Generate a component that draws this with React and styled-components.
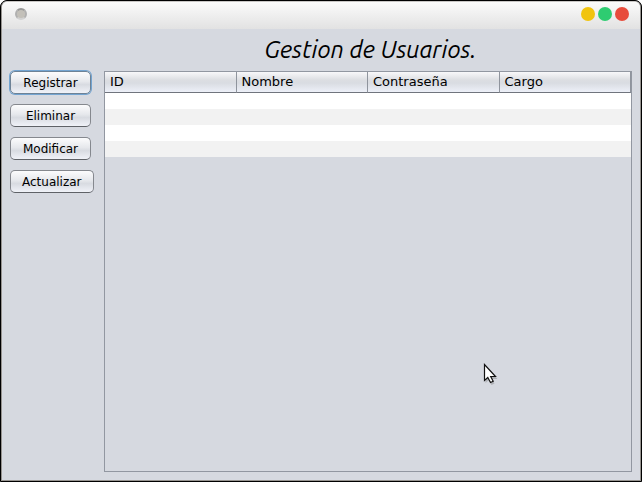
import React from "react";
import styled, { createGlobalStyle } from "styled-components";

const GlobalStyle = createGlobalStyle`
  * { box-sizing: border-box; }
  body {
    margin: 0;
    background: #fff;
    color: #000;
    font-family: "DejaVu Sans", Verdana, sans-serif;
    font-size: 13px;
  }
`;

const Window = styled.div`
  position: relative;
  display: flex;
  min-height: 100vh;
  border: 1px solid #000;
  border-radius: 7px 7px 0 0;
  background: #000;
`;

const Frame = styled.div`
  flex: 1;
  display: flex;
  flex-direction: column;
  min-width: 0;
  border: 1px solid #96938f;
  border-top-color: #c9c7c5;
  border-radius: 6px 6px 0 0;
  background: #d6d9e0;
  overflow: hidden;
`;

const TitleBar = styled.header`
  display: flex;
  align-items: center;
  justify-content: space-between;
  height: 27px;
  padding: 0 11px 3px 13px;
  background: linear-gradient(#fbfbfb, #e2e2e2);
`;

const MenuDot = styled.button`
  width: 12px;
  height: 12px;
  padding: 0;
  border: 2px solid #aaa;
  border-color: #979797 #b0b0b0 #d2d2d2;
  border-radius: 50%;
  background: #c3c0b9;
`;

const WindowControls = styled.div`
  display: flex;
  gap: 3px;
`;

const Control = styled.button`
  width: 14px;
  height: 14px;
  padding: 0;
  border: 0;
  border-radius: 50%;
  background: ${(p) => p.$color};
`;

const Content = styled.main`
  flex: 1;
  display: grid;
  grid-template-columns: 84px minmax(0, 1fr);
  grid-template-rows: 42px 1fr;
  column-gap: 10px;
  padding: 0 8px 8px;
`;

const Heading = styled.h1`
  grid-column: 2;
  margin: 0;
  padding: 4px 0 0 5px;
  font: italic 400 24px/34px Ubuntu, "Noto Sans", sans-serif;
  text-align: center;
`;

const Actions = styled.nav`
  display: flex;
  flex-direction: column;
  align-items: flex-start;
  gap: 10px;
`;

const ActionButton = styled.button`
  min-width: 81px;
  height: 23px;
  padding: 0 11px;
  border: 1px solid #85888e;
  border-bottom-color: #5f6267;
  border-radius: 5px;
  background: linear-gradient(#fcfcfd, #e6e8ec 45%, #d8dbe1 60%, #f0f2f8);
  color: #000;
  font: 12px/20px "DejaVu Sans", Verdana, sans-serif;
  white-space: nowrap;

  &:focus {
    outline: none;
    border-color: #6d8296;
    box-shadow: 0 0 0 1px #73a4d1;
  }
`;

const TablePane = styled.section`
  border: 1px solid #9297a1;
`;

const Table = styled.table`
  width: 100%;
  table-layout: fixed;
  border-collapse: separate;
  border-spacing: 0;
`;

const HeaderCell = styled.th`
  height: 21px;
  padding: 0 5px 1px;
  border-right: 1px solid #8f949d;
  border-bottom: 1px solid #70747d;
  background: linear-gradient(#f8f8fa, #dcdee2 40%, #d9dce2 55%, #edf0f8);
  font-weight: 400;
  line-height: 19px;
  text-align: left;
`;

const Row = styled.tr`
  background: #fff;
  &:nth-child(even) { background: #f2f2f2; }
`;

const Cell = styled.td`
  height: 16px;
  padding: 0;
`;

const Pointer = styled.svg`
  position: absolute;
  left: 482px;
  top: 362px;
  width: 15px;
  height: 22px;
  pointer-events: none;
`;

const actions = ["Registrar", "Eliminar", "Modificar", "Actualizar"];
const columns = ["ID", "Nombre", "Contraseña", "Cargo"];
const rows = [1, 2, 3, 4];

export default function App() {
  return (
    <>
      <GlobalStyle />
      <Window>
        <Frame>
          <TitleBar>
            <MenuDot type="button" aria-label="Menú" />
            <WindowControls>
              <Control type="button" aria-label="Minimizar" $color="#f1c40f" />
              <Control type="button" aria-label="Maximizar" $color="#2ecc71" />
              <Control type="button" aria-label="Cerrar" $color="#e74c3c" />
            </WindowControls>
          </TitleBar>
          <Content>
            <Heading>Gestion de Usuarios.</Heading>
            <Actions>
              {actions.map((label, i) => (
                <ActionButton key={label} type="button" autoFocus={i === 0}>
                  {label}
                </ActionButton>
              ))}
            </Actions>
            <TablePane>
              <Table>
                <thead>
                  <tr>
                    {columns.map((name) => (
                      <HeaderCell key={name} scope="col">{name}</HeaderCell>
                    ))}
                  </tr>
                </thead>
                <tbody>
                  {rows.map((id) => (
                    <Row key={id}>
                      {columns.map((name) => <Cell key={name} />)}
                    </Row>
                  ))}
                </tbody>
              </Table>
            </TablePane>
          </Content>
        </Frame>
        <Pointer viewBox="0 0 15 22" aria-hidden="true">
          <path d="M2.5 3.5V20l3.5-3 2.5 5 3-1.5-2.5-4.5H14.5Z" fill="#555" opacity=".3" />
          <path d="M1.5 1.5V17.5l3.3-3 2.7 5 2.7-1.3-2.5-4.7H12.5Z" fill="#fff" stroke="#111" strokeWidth="1.2" />
        </Pointer>
      </Window>
    </>
  );
}
